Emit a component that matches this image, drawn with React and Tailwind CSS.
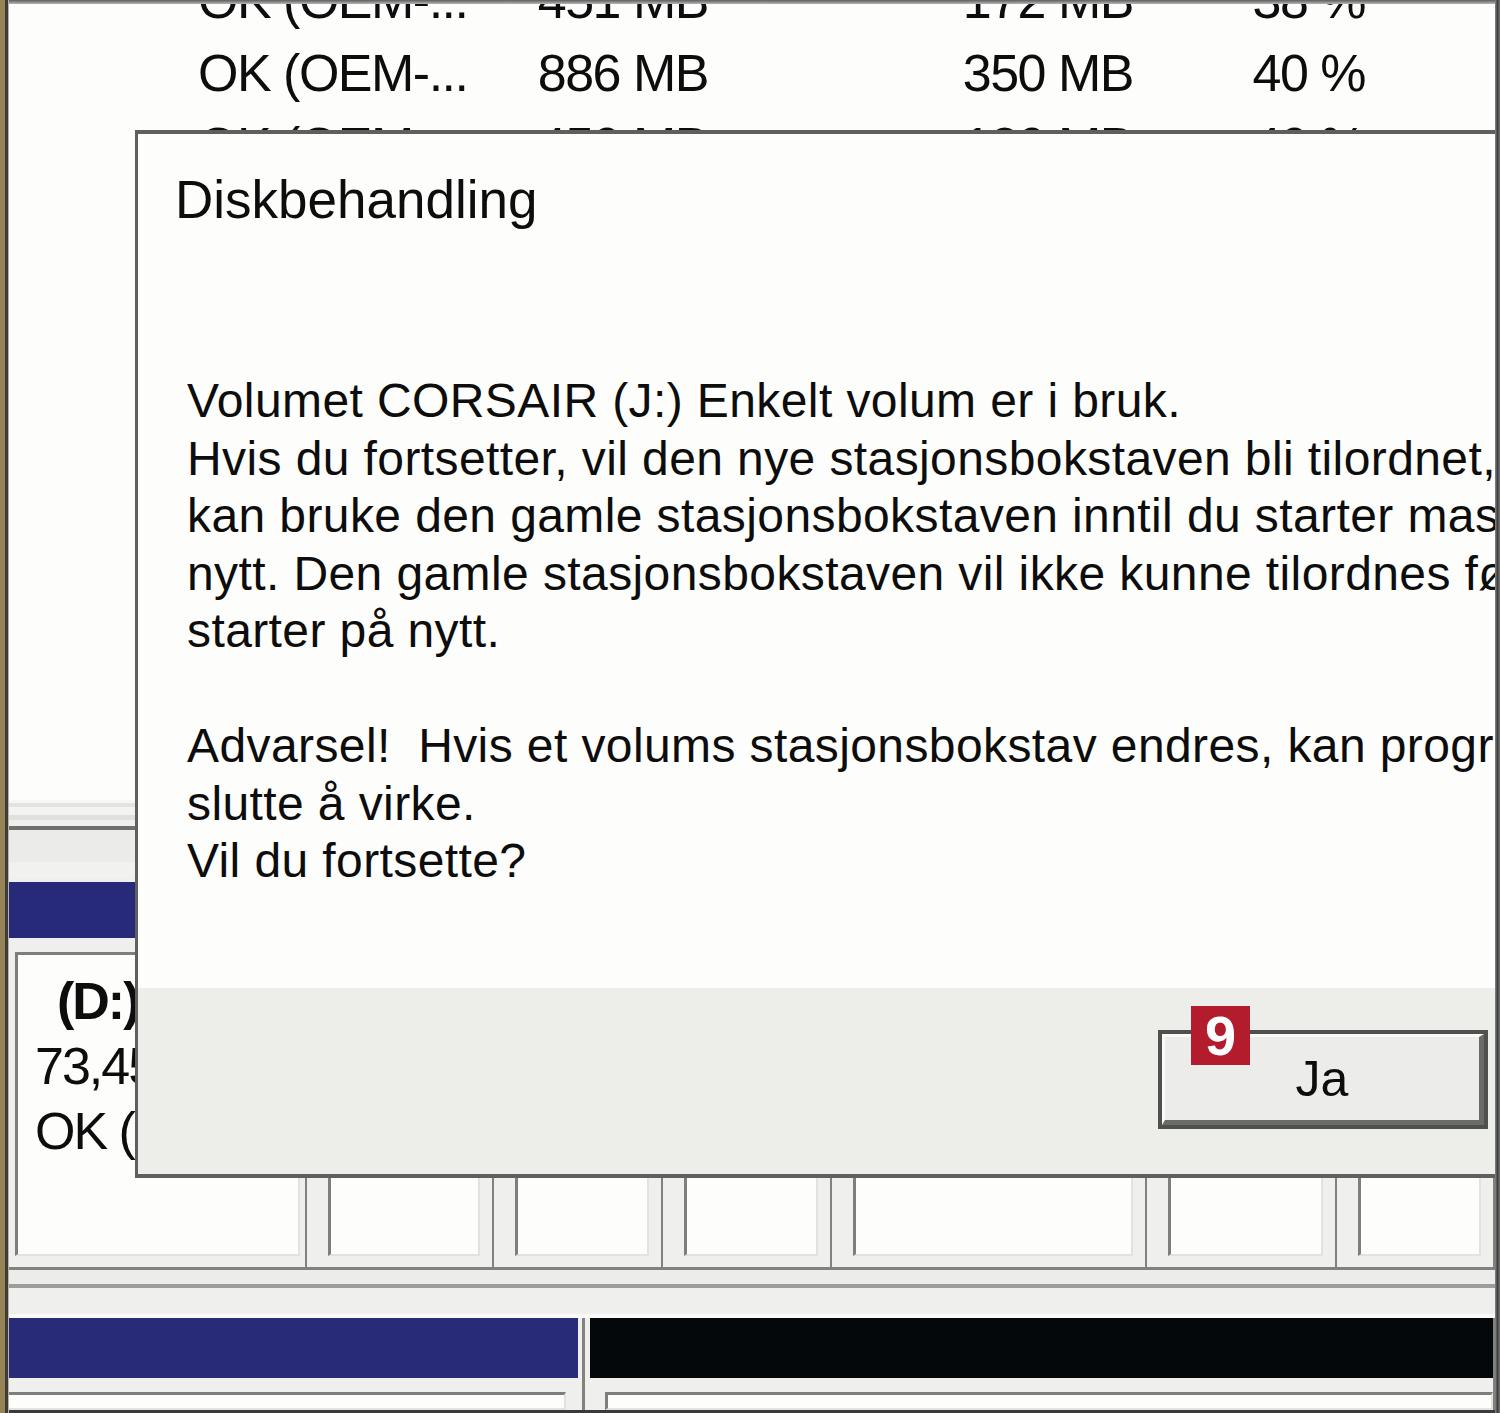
import React from 'react';

const volumes = [
  { status: 'OK (OEM-...', size: '451 MB', free: '172 MB', pct: '38 %' },
  { status: 'OK (OEM-...', size: '886 MB', free: '350 MB', pct: '40 %' },
  { status: 'OK (OEM-...', size: '450 MB', free: '180 MB', pct: '40 %' },
  { status: 'OK (Primær...', size: '73,45 GB', free: '41,20 GB', pct: '56 %' },
  { status: 'OK (Primær...', size: '14,65 GB', free: '9,87 GB', pct: '67 %' },
  { status: 'OK (Primær...', size: '3,73 GB', free: '3,71 GB', pct: '99 %' },
  { status: 'OK (Aktiv, ...', size: '100 MB', free: '72 MB', pct: '72 %' },
  { status: 'OK (Primær...', size: '465,76 GB', free: '201,3 GB', pct: '43 %' },
  { status: 'OK (Primær...', size: '7,45 GB', free: '7,44 GB', pct: '99 %' },
  { status: 'OK (Primær...', size: '29,8 GB', free: '12,1 GB', pct: '40 %' },
  { status: 'OK (Primær...', size: '1,82 TB', free: '0,93 TB', pct: '51 %' },
];

const message = [
  'Volumet CORSAIR (J:) Enkelt volum er i bruk.',
  'Hvis du fortsetter, vil den nye stasjonsbokstaven bli tilordnet, men du',
  'kan bruke den gamle stasjonsbokstaven inntil du starter maskinen på',
  'nytt. Den gamle stasjonsbokstaven vil ikke kunne tilordnes før du',
  'starter på nytt.',
  '',
  'Advarsel!  Hvis et volums stasjonsbokstav endres, kan programmer',
  'slutte å virke.',
  'Vil du fortsette?',
];

// felles ramme for en partisjon i diskvisningen
const Partition = ({ className, barClass, bodyClass, boxClass, children }) => (
  <div className={`flex flex-col border-r-2 border-[#80827e] bg-[#efefed] ${className}`}>
    <div className={barClass} />
    <div className={bodyClass}>
      <div
        className={`h-full bg-[#fdfdfb] border-t-[3px] border-t-[#7d7f7b] border-r-2 border-r-[#e2e2e0] border-b-2 border-b-[#e2e2e0] ${boxClass}`}
      >
        {children}
      </div>
    </div>
  </div>
);

const disk0 = [
  { w: 'w-[298px]', first: true },
  { w: 'w-[187px]' },
  { w: 'w-[169px]' },
  { w: 'w-[169px]' },
  { w: 'w-[315px]' },
  { w: 'w-[190px]' },
  { w: 'flex-1' },
];

const App = () => {
  return (
    <div className="flex w-[1500px] h-[1413px] overflow-hidden bg-white text-[#0d0d0d] font-['Liberation_Sans',Arial,sans-serif]">
      {/* venstre vinduskant */}
      <div className="w-[5px] bg-[#978456]" />
      <div className="w-[3px] bg-[#3e3c34]" />
      <div className="w-[1px] bg-[#b4b4b0]" />

      <div className="relative flex-1 flex flex-col overflow-hidden">
        <div className="h-[4px] bg-gradient-to-b from-[#5e5e5e] to-[#b8b8b8]" />

        {/* volumliste */}
        <div className="h-[796px] overflow-hidden bg-[#fdfdfb]">
          <div className="-mt-[40px]">
            {volumes.map((v, i) => (
              <div
                key={i}
                className="flex h-[73px] leading-[73px] text-[52px] tracking-[-1.5px] whitespace-nowrap pl-[189px]"
              >
                <span className="w-[280px]">{v.status}</span>
                <span className="w-[230px] text-right">{v.size}</span>
                <span className="w-[425px] text-right">{v.free}</span>
                <span className="w-[232px] text-right">{v.pct}</span>
              </div>
            ))}
          </div>
        </div>

        {/* splitter */}
        <div className="flex flex-col">
          <div className="h-[3px] bg-[#f6f6f4]" />
          <div className="h-[4px] bg-[#e2e2e0]" />
          <div className="h-[8px] bg-[#f3f3f1]" />
          <div className="h-[5px] bg-[#e0e0de]" />
          <div className="h-[6px] bg-[#efefed]" />
          <div className="h-[4px] bg-[#6d706b]" />
          <div className="h-[32px] bg-[#ebebe9]" />
          <div className="h-[16px] bg-[#f1f1ef]" />
        </div>

        {/* disk 0 */}
        <div className="flex h-[392px] border-b-[3px] border-[#80827e]">
          {disk0.map((p, i) => (
            <Partition
              key={i}
              className={`${p.w} pt-[4px]`}
              barClass={p.first ? 'h-[56px] bg-[#262a79] mr-[3px]' : 'h-[56px] bg-[#262a79] ml-[4px] mr-[3px]'}
              bodyClass={p.first ? 'flex-1 pt-[14px] pb-[11px] pl-[6px] pr-[5px]' : 'flex-1 pt-[14px] pb-[11px] pl-[21px] pr-[12px]'}
              boxClass="border-l-[3px] border-l-[#7d7f7b]"
            >
              {p.first && (
                <div className="pt-[14px] text-[52px] leading-[65px] tracking-[-2px] whitespace-nowrap">
                  <div className="pl-[39px] font-bold">(D:)</div>
                  <div className="pl-[17px]">73,45 GB NTFS</div>
                  <div className="pl-[17px]">OK (Primær partisjon)</div>
                </div>
              )}
            </Partition>
          ))}
        </div>

        <div className="flex flex-col">
          <div className="h-[14px] bg-[#ececea]" />
          <div className="h-[4px] bg-[#9c9e9a]" />
          <div className="h-[26px] bg-[#efefed]" />
          <div className="h-[4px] bg-[#fafaf8]" />
        </div>

        {/* disk 1 */}
        <div className="flex flex-1">
          <Partition
            className="w-[576px] border-r-[3px]"
            barClass="h-[60px] bg-[#272b78] mr-[4px]"
            bodyClass="flex-1 pt-[14px] pr-[16px]"
            boxClass=""
          />
          <Partition
            className="flex-1 border-r-0"
            barClass="h-[60px] bg-[#05080a] ml-[5px]"
            bodyClass="flex-1 pt-[14px] pl-[20px]"
            boxClass="border-l-[3px] border-l-[#7d7f7b]"
          />
        </div>
        <div className="h-[3px] bg-[#3a3a3a]" />

        {/* dialogboks */}
        <div className="absolute left-[126px] top-[130px] w-[1500px] h-[1048px] flex flex-col border-t-4 border-l-[3px] border-b-4 border-[#5f605d] bg-[#fdfdfb]">
          <div className="flex-1 pt-[37px] pl-[37px]">
            <div className="text-[53px] leading-[57px]">Diskbehandling</div>
            <div className="mt-[144px] ml-[12px] text-[48px] tracking-[0.4px] leading-[57.5px] whitespace-pre">
              {message.map((line, i) => (
                <div key={i} className="h-[57.5px]">
                  {line || '\u00a0'}
                </div>
              ))}
            </div>
          </div>
          <div className="h-[186px] bg-[#ededea] pt-[42px] pl-[1020px]">
            <div className="relative w-[330px] h-[99px] border-4 border-[#4f514d]">
              <div className="h-full flex items-center justify-center bg-[#ececea] border-t-[3px] border-l-[3px] border-t-[#fafaf8] border-l-[#fafaf8] border-r-[5px] border-b-[5px] border-r-[#6a6c68] border-b-[#6a6c68]">
                <span className="text-[50px] leading-none">Ja</span>
              </div>
              <div className="absolute -top-[28px] left-[29px] w-[59px] h-[59px] bg-[#b21c2c] flex items-center justify-center text-white font-bold text-[56px] leading-none">
                9
              </div>
            </div>
          </div>
        </div>
      </div>

      {/* høyre vinduskant */}
      <div className="w-[5px] bg-gradient-to-r from-[#8a8a8a] via-[#3f3f3f] to-[#777]" />
    </div>
  );
};

export default App;
